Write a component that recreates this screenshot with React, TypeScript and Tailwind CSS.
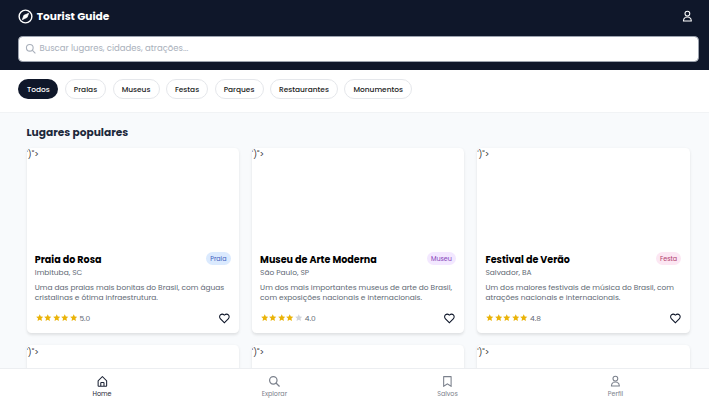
import { BiHomeAlt } from "react-icons/bi";
import { RiBookmarkLine, RiHeartLine, RiStarFill } from "react-icons/ri";

function UserIcon({ className }: { className?: string }) {
  return (
    <svg viewBox="0 0 24 24" className={className} fill="none" stroke="currentColor" strokeWidth="2">
      <circle cx="12" cy="6.700" r="4.500" />
      <path d="M8.500 13.500C6 14.700 4.500 17 4.500 20.700h15c0-3.700-1.500-6-4-7.200" strokeLinejoin="round" />
      <path d="M8.500 13.600Q12 12.400 15.500 13.600" />
    </svg>
  );
}

function SearchIcon({ className }: { className?: string }) {
  return (
    <svg viewBox="0 0 24 24" className={className} fill="none" stroke="currentColor" strokeWidth="2.300">
      <circle cx="10" cy="10" r="7" />
      <path d="M15 15l6.700 6.700" />
    </svg>
  );
}

function CompassIcon({ className }: { className?: string }) {
  return (
    <svg viewBox="0 0 24 24" className={className} fill="none" stroke="currentColor" strokeWidth="2">
      <circle cx="12" cy="12" r="9" />
      <path
        d="M16.500 7.500L14.300 13.200L7.500 16.500L9.700 10.400Z"
        fill="currentColor"
        strokeWidth="1"
        strokeLinejoin="round"
      />
    </svg>
  );
}

const categories = ["Todos", "Praias", "Museus", "Festas", "Parques", "Restaurantes", "Monumentos"];

const places = [
  {
    name: "Praia do Rosa",
    city: "Imbituba, SC",
    tag: "Praia",
    tagClass: "bg-[#dbeafe] text-[#3f5fc0]",
    lines: ["Uma das praias mais bonitas do Brasil, com águas", "cristalinas e ótima infraestrutura."],
    stars: 5,
    rating: "5.0",
  },
  {
    name: "Museu de Arte Moderna",
    city: "São Paulo, SP",
    tag: "Museu",
    tagClass: "bg-[#f3e8ff] text-[#8440b8]",
    lines: ["Um dos mais importantes museus de arte do Brasil,", "com exposições nacionais e internacionais."],
    stars: 4,
    rating: "4.0",
  },
  {
    name: "Festival de Verão",
    city: "Salvador, BA",
    tag: "Festa",
    tagClass: "bg-[#fce7f3] text-[#b03a6c]",
    lines: ["Um dos maiores festivais de música do Brasil, com", "atrações nacionais e internacionais."],
    stars: 5,
    rating: "4.8",
  },
];

const tabs = [
  { label: "Home", Icon: BiHomeAlt, active: true },
  { label: "Explorar", Icon: SearchIcon, active: false },
  { label: "Salvos", Icon: RiBookmarkLine, active: false },
  { label: "Perfil", Icon: UserIcon, active: false },
];

const cardClass = "rounded-[4.5px] bg-white shadow-[0_1.5px_3px_rgba(0,0,0,0.1)] overflow-hidden";

export default function App() {
  return (
    <div className="flex h-[401px] w-[709px] flex-col overflow-hidden bg-[#f8fafc] font-['Poppins','Inter',sans-serif]">
      <header className="h-[70px] shrink-0 bg-[#0f172a] pr-[10.500px] pl-[18px] text-white">
        <div className="flex h-8 items-center justify-between pr-[5px]">
          <div className="flex items-center gap-[2.800px] text-[10.640px] font-bold">
            <CompassIcon className="-ml-px size-[17px]" />
            <span className="pt-px">Tourist Guide</span>
          </div>
          <UserIcon className="size-[12.770px]" />
        </div>
        <div className="mt-[3.500px] flex h-[26.500px] items-center gap-[4.500px] rounded-[4.500px] border border-[#9ca3af] bg-white pl-[5.500px] text-[#a9b0bb]">
          <SearchIcon className="-mt-px size-[11.500px]" />
          <span className="-ml-px text-[8.510px]">Buscar lugares, cidades, atrações...</span>
        </div>
      </header>

      <div className="h-[42.500px] shrink-0 border-b border-[#f1f3f5] bg-white pt-[8.800px] pl-[18.300px]">
        <div className="flex gap-[6.380px]">
          {categories.map((c, i) => (
            <span
              key={c}
              className={`flex h-[20.200px] items-center rounded-full pt-px text-[7.450px] font-medium ${
                i === 0
                  ? "bg-[#0f172a] px-[8.700px] text-white"
                  : "border border-[#e5e7eb] bg-white px-[8.080px] text-[#1a1a1a]"
              }`}
            >
              {c}
            </span>
          ))}
        </div>
      </div>

      <main className="min-h-0 flex-1 overflow-hidden pt-[12px] pr-[19.300px] pl-[26.500px]">
        <h2 className="h-[16px] text-[10.640px] leading-[16px] font-bold text-[#1e293b]">Lugares populares</h2>
        <div className="mt-[7.700px] grid grid-cols-3 gap-[12.770px]">
          {places.map((p) => (
            <article key={p.name} className={`h-[184.500px] ${cardClass}`}>
              <div className="h-[102.500px] text-[8.510px] leading-[12.800px] text-[#333333]">')"&gt;</div>
              <div className="px-[8.300px]">
                <div className="flex h-[16px] items-center justify-between">
                  <h3 className="pt-[3.400px] text-[9.570px] leading-[14.900px] font-bold text-black">{p.name}</h3>
                  <span className={`rounded-full px-[4.250px] pt-[2.600px] pb-[1.600px] text-[6.380px] leading-[8.500px] ${p.tagClass}`}>
                    {p.tag}
                  </span>
                </div>
                <p className="mt-[1.500px] text-[7.450px] leading-[10.600px] text-[#606873]">{p.city}</p>
                <p className="mt-[4.300px] text-[7.450px] leading-[10.200px] whitespace-nowrap text-[#606873]">
                  {p.lines[0]}
                  <br />
                  {p.lines[1]}
                </p>
                <div className="mt-[8px] flex h-[13px] items-center justify-between">
                  <div className="flex items-center">
                    {[1, 2, 3, 4, 5].map((n) => (
                      <RiStarFill
                        key={n}
                        className={`mr-[0.250px] ml-[0.760px] size-[7.500px] ${n <= p.stars ? "text-[#eab308]" : "text-[#d1d5db]"}`}
                      />
                    ))}
                    <span className="ml-[2.100px] pt-[1.800px] text-[7.450px] leading-[10.600px] text-[#606873]">{p.rating}</span>
                  </div>
                  <RiHeartLine className="size-[12.770px] text-[#0f172a]" />
                </div>
              </div>
            </article>
          ))}
          {places.map((p) => (
            <article key={p.city} className={`h-[184.500px] ${cardClass}`}>
              <div className="pt-[0.600px] text-[8.510px] leading-[12.800px] text-[#333333]">')"&gt;</div>
            </article>
          ))}
        </div>
      </main>

      <nav className="flex h-[33px] shrink-0 justify-around border-t border-[#eceef1] bg-white pt-[6px] pr-[10.800px] pl-[17.500px]">
        {tabs.map(({ label, Icon, active }) => (
          <div
            key={label}
            className={`flex flex-col items-center ${active ? "text-[#1e2537]" : "text-[#7b818c]"}`}
          >
            <Icon className="size-[12.770px]" />
            <span className="mt-[2px] text-[6.380px] leading-[8.500px]">{label}</span>
          </div>
        ))}
      </nav>
    </div>
  );
}
